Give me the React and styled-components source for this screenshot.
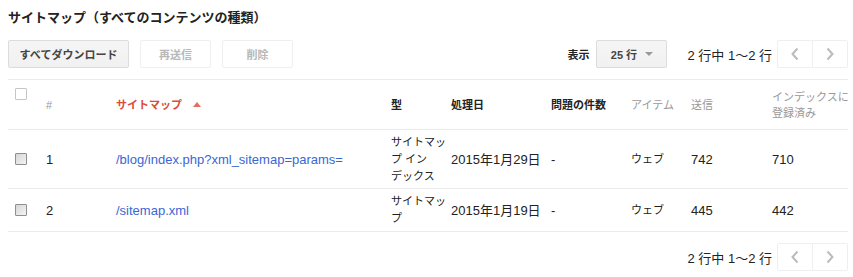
import React from "react";
import styled, { createGlobalStyle } from "styled-components";

const GlobalStyle = createGlobalStyle`
  body {
    margin: 0;
    background: #fff;
    font-family: "Liberation Sans", Arial, "Noto Sans CJK JP", sans-serif;
    color: #222;
  }
`;

const Page = styled.div`
  width: 840px;
  padding: 10px 0 0 8px;
`;

const Title = styled.h1`
  margin: 0;
  font-size: 13px;
  line-height: 16px;
  font-weight: bold;
  color: #222;
`;

const Toolbar = styled.div`
  display: flex;
  align-items: center;
  margin-top: 14px;
  margin-bottom: 11px;
  height: 28px;
`;

const Spacer = styled.div`
  flex: 1;
`;

const Button = styled.button`
  height: 28px;
  width: ${(p) => p.$w}px;
  margin-right: 11px;
  padding: 0;
  border-radius: 2px;
  font-family: inherit;
  font-size: 11px;
  font-weight: bold;
  color: ${(p) => (p.disabled ? "#b8b8b8" : "#444")};
  background: ${(p) =>
    p.disabled ? "#fff" : "linear-gradient(#f5f5f5, #f1f1f1)"};
  border: 1px solid ${(p) => (p.disabled ? "#efefef" : "#dcdcdc")};
  cursor: default;
`;

const ShowLabel = styled.span`
  font-size: 11px;
  font-weight: bold;
  margin-right: 7px;
`;

const Select = styled.div`
  width: 71px;
  height: 28px;
  box-sizing: border-box;
  display: flex;
  align-items: center;
  justify-content: center;
  gap: 8px;
  border: 1px solid #dcdcdc;
  border-radius: 2px;
  background: linear-gradient(#f5f5f5, #f1f1f1);
  font-size: 11px;
  font-weight: bold;
  color: #444;
  margin-right: 20px;
`;

const Caret = styled.span`
  width: 0;
  height: 0;
  border-left: 4px solid transparent;
  border-right: 4px solid transparent;
  border-top: 4px solid #999;
`;

const RangeText = styled.span`
  font-size: 13px;
  color: #222;
  margin-right: 5px;
`;

const Pager = styled.div`
  display: flex;
  height: 28px;
`;

const PagerButton = styled.div`
  width: ${(p) => p.$w}px;
  height: 28px;
  box-sizing: border-box;
  display: flex;
  align-items: center;
  justify-content: center;
  border: 1px solid #efefef;
  border-left-width: ${(p) => (p.$first ? 1 : 0)}px;
  border-radius: ${(p) => (p.$first ? "2px 0 0 2px" : "0 2px 2px 0")};
`;

const Table = styled.div`
  border-top: 1px solid #ebebeb;
`;

const Row = styled.div`
  display: grid;
  grid-template-columns: 30px 70px 275px 60px 100px 80px 60px 81px 84px;
  border-bottom: 1px solid #ebebeb;
  align-items: center;
  min-height: ${(p) => p.$h}px;
  box-sizing: border-box;
`;

const Cell = styled.div`
  padding: 3px 0 3px 8px;
  font-size: ${(p) => (p.$cjk ? 11 : 13)}px;
  line-height: 17px;
  color: #222;
  white-space: ${(p) => (p.$pre ? "pre" : "normal")};
`;

const HeadCell = styled.div`
  padding-left: 8px;
  font-size: 11px;
  line-height: 16px;
  font-weight: ${(p) => (p.$muted ? "normal" : "bold")};
  color: ${(p) => (p.$active ? "#dd4b39" : p.$muted ? "#999" : "#222")};
  white-space: pre;
  display: flex;
  align-items: center;
  gap: 8px;
`;

const CheckCell = styled.div`
  padding-left: 7px;
  align-self: ${(p) => (p.$top ? "start" : "center")};
  padding-top: ${(p) => (p.$top ? 8 : 0)}px;
  display: flex;
`;

const Check = styled.span`
  width: 12px;
  height: 12px;
  box-sizing: border-box;
  border: 1px solid ${(p) => (p.$plain ? "#c6c6c6" : "#8f8f8f")};
  background: ${(p) =>
    p.$plain ? "#fff" : "linear-gradient(135deg, #d6d6d6, #f4f4f4)"};
  border-radius: 1px;
`;

const SortUp = styled.span`
  width: 0;
  height: 0;
  border-left: 4px solid transparent;
  border-right: 4px solid transparent;
  border-bottom: 5px solid #e0705f;
`;

const Link = styled.a`
  color: #3a66d6;
  text-decoration: none;
`;

const Footer = styled.div`
  display: flex;
  justify-content: flex-end;
  align-items: center;
  margin-top: 11px;
`;

const Chevron = ({ dir }) => (
  <svg width="10" height="14" viewBox="0 0 10 14">
    <path
      d={dir === "left" ? "M7.5 1.5 L2.5 7 L7.5 12.5" : "M2.5 1.5 L7.5 7 L2.5 12.5"}
      fill="none"
      stroke="#bbb"
      strokeWidth="2"
    />
  </svg>
);

const Pagination = () => (
  <>
    <RangeText>2 行中 1～2 行</RangeText>
    <Pager>
      <PagerButton $w={36} $first>
        <Chevron dir="left" />
      </PagerButton>
      <PagerButton $w={35}>
        <Chevron dir="right" />
      </PagerButton>
    </Pager>
  </>
);

const rows = [
  {
    id: 1,
    path: "/blog/index.php?xml_sitemap=params=",
    type: "サイトマッ\nプ イン\nデックス",
    date: "2015年1月29日",
    sent: 742,
    indexed: 710,
    h: 59,
  },
  {
    id: 2,
    path: "/sitemap.xml",
    type: "サイトマッ\nプ",
    date: "2015年1月19日",
    sent: 445,
    indexed: 442,
    h: 43,
  },
];

const App = () => (
  <Page>
    <GlobalStyle />
    <Title>サイトマップ（すべてのコンテンツの種類）</Title>
    <Toolbar>
      <Button $w={121}>すべてダウンロード</Button>
      <Button $w={71} disabled>
        再送信
      </Button>
      <Button $w={71} disabled>
        削除
      </Button>
      <Spacer />
      <ShowLabel>表示</ShowLabel>
      <Select>
        25 行 <Caret />
      </Select>
      <Pagination />
    </Toolbar>
    <Table>
      <Row $h={50}>
        <CheckCell $top>
          <Check $plain />
        </CheckCell>
        <HeadCell $muted>#</HeadCell>
        <HeadCell $active>
          サイトマップ <SortUp />
        </HeadCell>
        <HeadCell>型</HeadCell>
        <HeadCell>処理日</HeadCell>
        <HeadCell>問題の件数</HeadCell>
        <HeadCell $muted>アイテム</HeadCell>
        <HeadCell $muted>送信</HeadCell>
        <HeadCell $muted>{"インデックスに\n登録済み"}</HeadCell>
      </Row>
      {rows.map((r) => (
        <Row key={r.id} $h={r.h}>
          <CheckCell>
            <Check />
          </CheckCell>
          <Cell>{r.id}</Cell>
          <Cell>
            <Link href="#">{r.path}</Link>
          </Cell>
          <Cell $cjk $pre>
            {r.type}
          </Cell>
          <Cell>{r.date}</Cell>
          <Cell>-</Cell>
          <Cell $cjk>ウェブ</Cell>
          <Cell>{r.sent}</Cell>
          <Cell>{r.indexed}</Cell>
        </Row>
      ))}
    </Table>
    <Footer>
      <Pagination />
    </Footer>
  </Page>
);

export default App;
